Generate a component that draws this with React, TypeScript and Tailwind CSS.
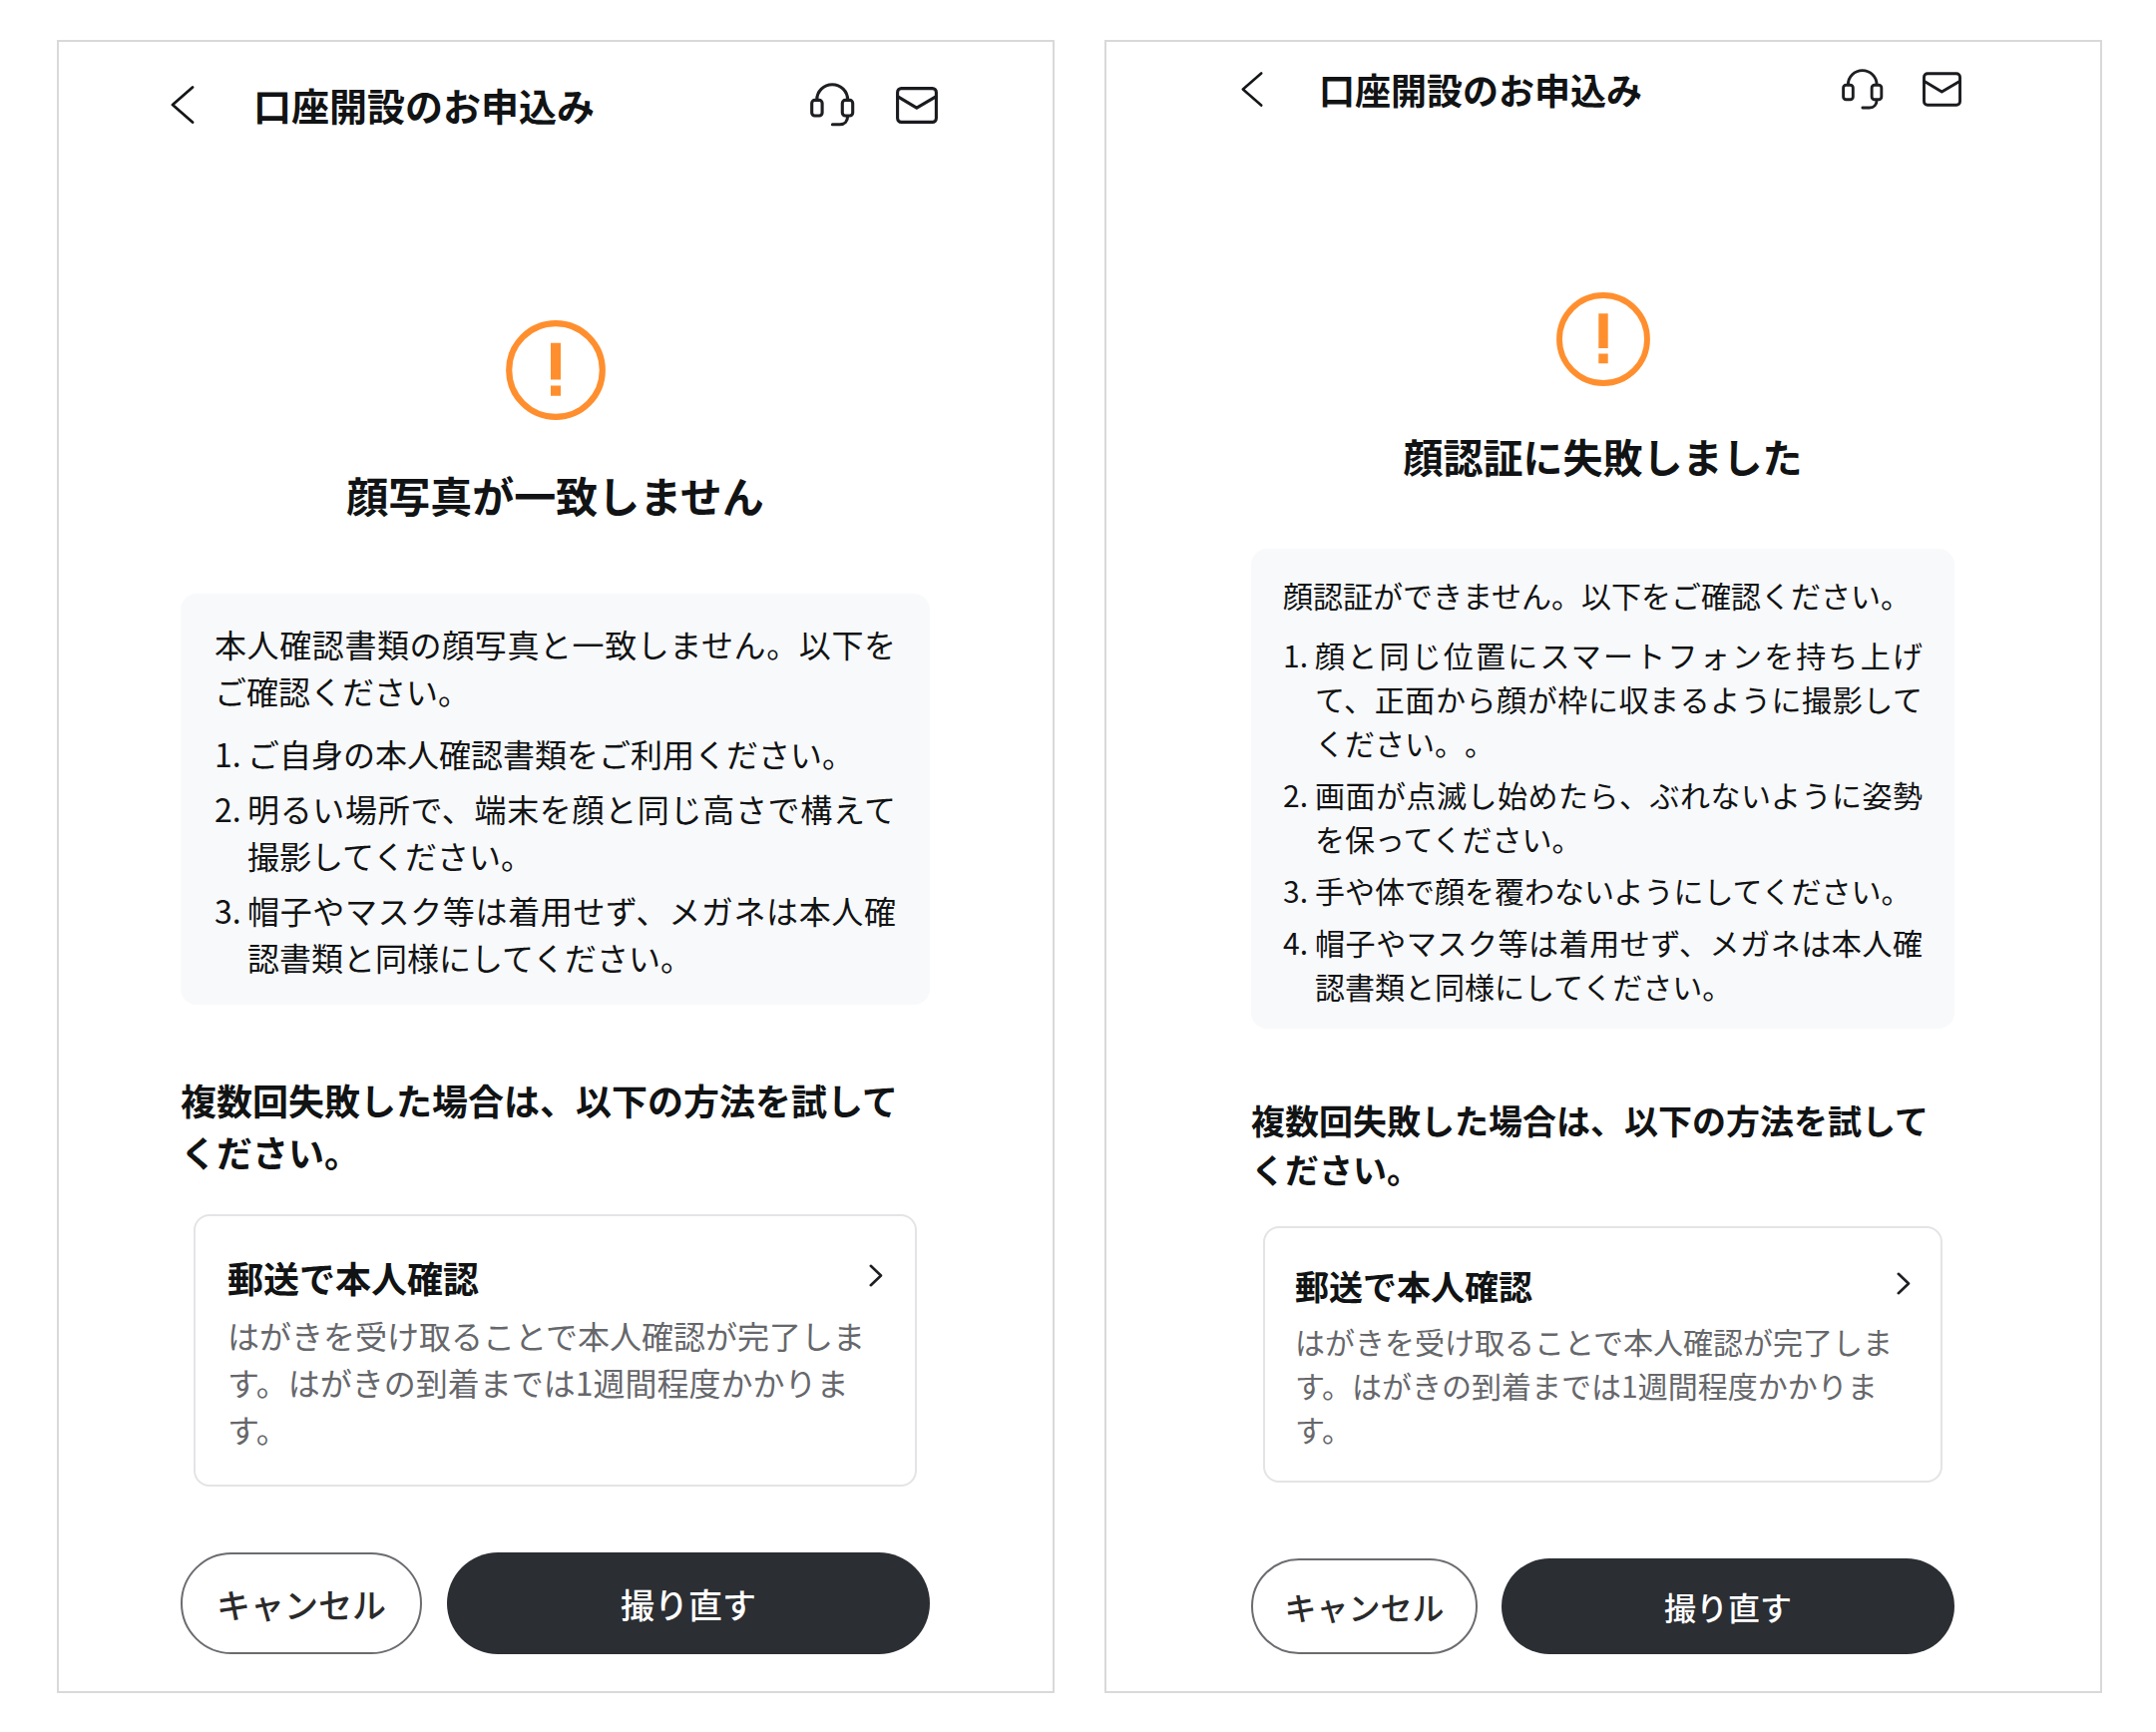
import React from "react";

const BackIcon = ({ className }: { className: string }) => (
  <svg className={className} viewBox="0 0 24 38" fill="none" stroke="#141618" strokeWidth="2.8" strokeLinecap="round" strokeLinejoin="round">
    <path d="M22 1.5 2 19l20 17.5" />
  </svg>
);

const HeadsetIcon = ({ className }: { className: string }) => (
  <svg className={className} viewBox="0 0 45 44" fill="none" stroke="#1e1f22" strokeWidth="3.1" strokeLinecap="round">
    <rect x="1.7" y="17.4" width="10.4" height="15.6" rx="3" />
    <rect x="32.3" y="17.4" width="10.4" height="15.6" rx="3" />
    <path d="M6.8 17v-.1a15.4 15.2 0 0 1 30.8 0v.1" />
    <path d="M37.6 33.5c0 5-3 8.3-7.8 8.3h-7.4" />
  </svg>
);

const MailIcon = ({ className }: { className: string }) => (
  <svg className={className} viewBox="0 0 42 37" fill="none" stroke="#1a1b1e" strokeWidth="3.1" strokeLinecap="round" strokeLinejoin="round">
    <rect x="1.6" y="1.6" width="38.8" height="33.8" rx="3.8" />
    <path d="m2 9.8 18.8 11.4L40 9.8" />
  </svg>
);

const WarningIcon = ({ className }: { className: string }) => (
  <svg className={className} viewBox="0 0 100 100" fill="none">
    <circle cx="50" cy="50" r="46.8" stroke="#ff8f2e" strokeWidth="6.2" />
    <path d="M45 22.7h10v36.8H45zM45 65.5h10v10.3H45z" fill="#ff8f2e" />
  </svg>
);

const ChevronIcon = () => (
  <svg className="h-[27px] w-[14px] shrink-0" viewBox="0 0 14 27" fill="none" stroke="#1e1f22" strokeWidth="2.6" strokeLinecap="round" strokeLinejoin="round">
    <path d="m1.8 1.8 10.2 9.7-10.2 9.7" />
  </svg>
);

// the two screens share one layout and differ in scale
const large = {
  header: "pt-[34px] pl-[112px] pr-[115px]",
  headerTitle: "ml-[59px] text-[38px] leading-[58px]",
  back: "h-[38px] w-[24px]",
  actions: "gap-[41px]",
  headset: "h-[44px] w-[45px]",
  mail: "h-[37px] w-[42px]",
  main: "pl-[122px] pr-[123px] pt-[187px] pb-[37px]",
  warning: "size-[100px]",
  title: "mt-[44px] text-[42px] leading-[62px]",
  notice: "mt-[68px] px-[34px] pt-[27px] pb-[24px] text-[32px] leading-[47px]",
  number: "w-[33px]",
  subtitle: "mt-[69px] text-[36px] leading-[52px]",
  card: "mx-[13px] mt-[37px] px-[32px] pt-[35px] pb-[32px]",
  cardTitle: "text-[36px] leading-[52px]",
  cardText: "mt-[9px] text-[32px] leading-[47px]",
  buttons: "mt-[66px] h-[102px] gap-[25px] text-[34px]",
  cancel: "w-[242px]",
};

const medium = {
  header: "pt-[20px] pl-[135px] pr-[139px]",
  headerTitle: "ml-[56px] text-[36px] leading-[54px]",
  back: "h-[35px] w-[22px]",
  actions: "gap-[39px]",
  headset: "h-[41px] w-[42px]",
  mail: "h-[35px] w-[39px]",
  main: "pl-[145px] pr-[146px] pt-[177px] pb-[37px]",
  warning: "size-[94px]",
  title: "mt-[41px] text-[40px] leading-[58px]",
  notice: "mt-[64px] px-[32px] pt-[24px] pb-[21px] text-[30px] leading-[44px]",
  number: "w-[32px]",
  subtitle: "mt-[67px] text-[34px] leading-[49px]",
  card: "mx-[12px] mt-[33px] px-[30px] pt-[33px] pb-[30px]",
  cardTitle: "text-[34px] leading-[49px]",
  cardText: "mt-[9px] text-[30px] leading-[44px]",
  buttons: "mt-[76px] h-[96px] gap-[24px] text-[32px]",
  cancel: "w-[227px]",
};

type ScreenProps = {
  s: typeof large;
  title: string;
  lead: string;
  items: string[];
};

const Screen = ({ s, title, lead, items }: ScreenProps) => {
  return (
    <section className="border-2 border-[#d9d9d9] bg-white">
      <header className={`flex items-center ${s.header}`}>
        <button type="button" aria-label="戻る">
          <BackIcon className={s.back} />
        </button>
        <h1 className={`flex-1 font-bold ${s.headerTitle}`}>口座開設のお申込み</h1>
        <div className={`flex items-center ${s.actions}`}>
          <button type="button" aria-label="サポート">
            <HeadsetIcon className={s.headset} />
          </button>
          <button type="button" aria-label="メール">
            <MailIcon className={s.mail} />
          </button>
        </div>
      </header>

      <main className={`flex flex-col ${s.main}`}>
        <WarningIcon className={`self-center ${s.warning}`} />
        <h2 className={`text-center font-bold ${s.title}`}>{title}</h2>

        <div className={`rounded-2xl bg-[#f8f9fb] text-justify ${s.notice}`}>
          <p>{lead}</p>
          <ol className="mt-4 flex flex-col gap-2">
            {items.map((item, i) => (
              <li key={item} className="flex">
                <span className={`shrink-0 ${s.number}`}>{i + 1}.</span>
                <span className="flex-1">{item}</span>
              </li>
            ))}
          </ol>
        </div>

        <h3 className={`font-bold ${s.subtitle}`}>
          複数回失敗した場合は、以下の方法を試してください。
        </h3>
        <a href="#" className={`block rounded-2xl border-2 border-[#e4e4e6] ${s.card}`}>
          <div className="flex items-center justify-between">
            <h4 className={`font-bold ${s.cardTitle}`}>郵送で本人確認</h4>
            <ChevronIcon />
          </div>
          <p className={`text-[#66676b] ${s.cardText}`}>
            はがきを受け取ることで本人確認が完了します。はがきの到着までは1週間程度かかります。
          </p>
        </a>

        <div className={`flex font-medium ${s.buttons}`}>
          <button type="button" className={`rounded-full border-2 border-[#6b6c70] text-[#2a2a2a] ${s.cancel}`}>
            キャンセル
          </button>
          <button type="button" className="flex-1 rounded-full bg-[#2b2e33] text-white">
            撮り直す
          </button>
        </div>
      </main>
    </section>
  );
};

const App = () => {
  return (
    <div
      lang="ja"
      className="grid grid-cols-2 gap-[50px] bg-white py-10 pr-[54px] pl-[57px] font-['Noto_Sans_CJK_JP',sans-serif] text-[#111314] [text-spacing-trim:space-all]"
    >
      <Screen
        s={large}
        title="顔写真が一致しません"
        lead="本人確認書類の顔写真と一致しません。以下をご確認ください。"
        items={[
          "ご自身の本人確認書類をご利用ください。",
          "明るい場所で、端末を顔と同じ高さで構えて撮影してください。",
          "帽子やマスク等は着用せず、メガネは本人確認書類と同様にしてください。",
        ]}
      />
      <Screen
        s={medium}
        title="顔認証に失敗しました"
        lead="顔認証ができません。以下をご確認ください。"
        items={[
          "顔と同じ位置にスマートフォンを持ち上げて、正面から顔が枠に収まるように撮影してください。。",
          "画面が点滅し始めたら、ぶれないように姿勢を保ってください。",
          "手や体で顔を覆わないようにしてください。",
          "帽子やマスク等は着用せず、メガネは本人確認書類と同様にしてください。",
        ]}
      />
    </div>
  );
};

export default App;
